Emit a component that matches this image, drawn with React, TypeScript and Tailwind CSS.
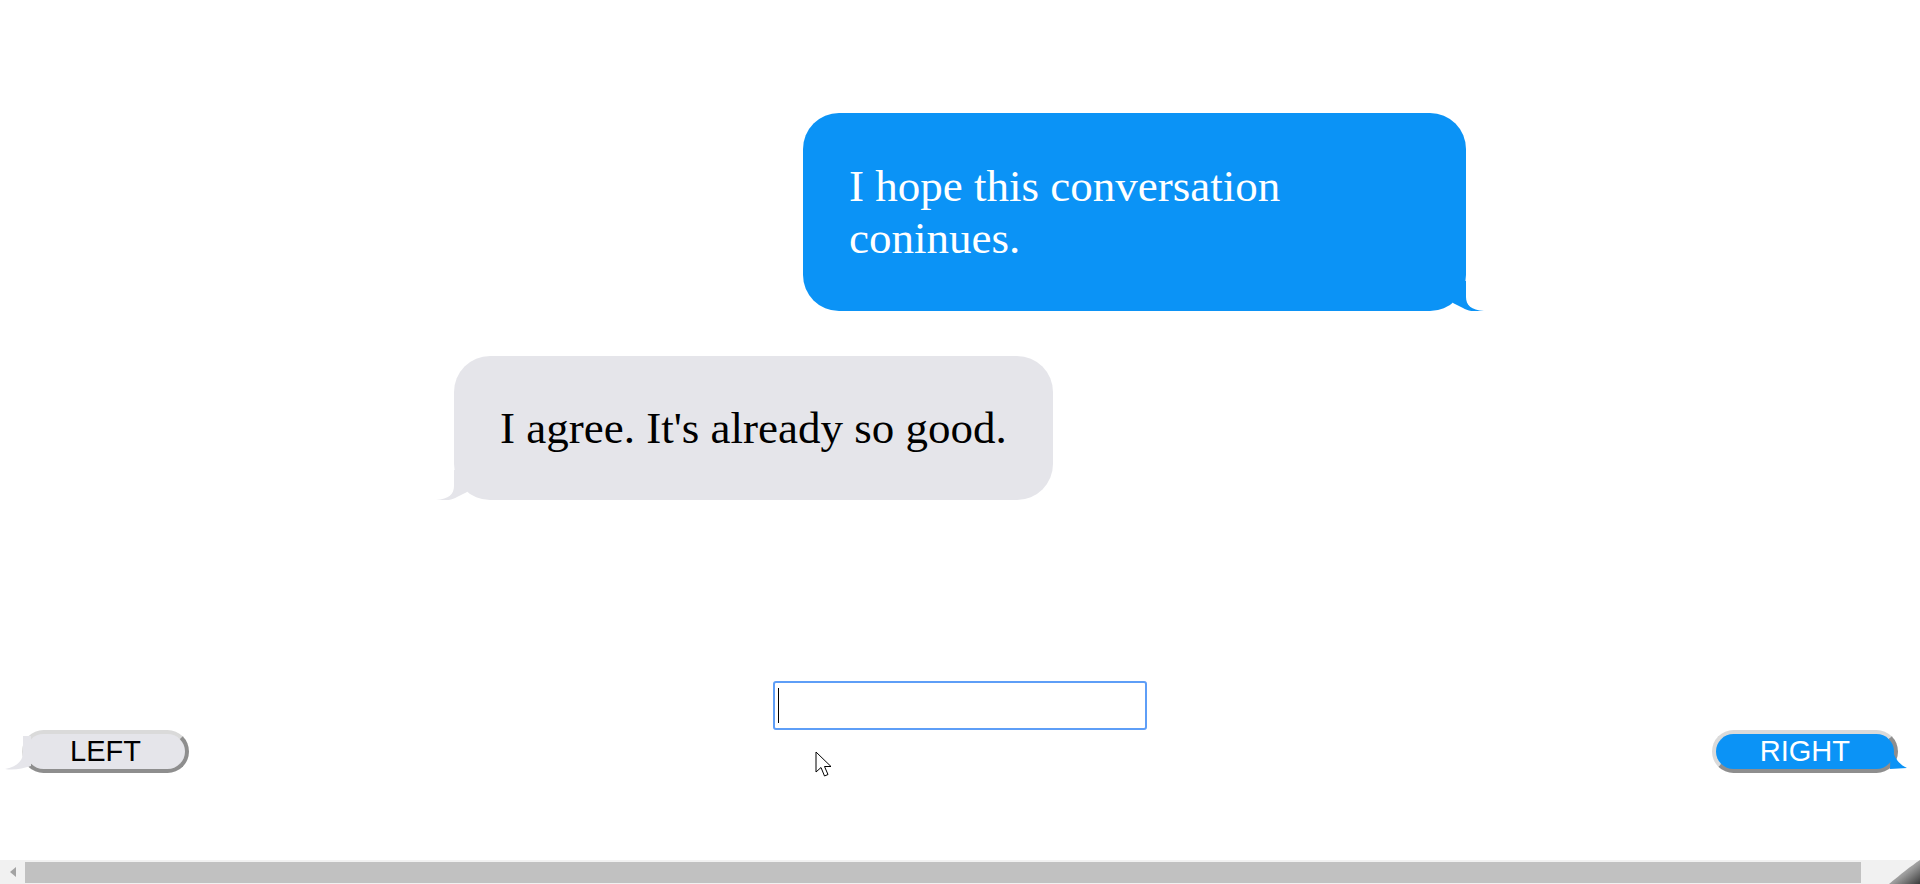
const serif = { fontFamily: '"Liberation Serif", "Times New Roman", serif' }

function Tail({ side, color }: { side: 'left' | 'right'; color: string }) {
  // bubble tail in the bottom corner, mirrored for the left side
  const d = 'M13,0 L13,16 C13,24 18,29 31,30 C23,31.5 15,30 10,27 L0,22 L0,0 Z'
  return (
    <svg
      className={
        side === 'right'
          ? 'absolute bottom-0 right-[-18px] h-[30px] w-[31px]'
          : 'absolute bottom-0 left-[-18px] h-[30px] w-[31px] -scale-x-100'
      }
      viewBox="0 0 31 30"
    >
      <path d={d} fill={color} />
    </svg>
  )
}

function Bubble({ from, children }: { from: 'me' | 'them'; children: React.ReactNode }) {
  const me = from === 'me'
  return (
    <div
      className={
        me
          ? 'relative max-w-[663px] self-end rounded-[36px] bg-[#0b93f6] px-[46px] py-[47px] text-[45px] leading-[52px] text-white'
          : 'relative self-start rounded-[36px] bg-[#e5e5ea] px-[46px] py-[46px] text-[45px] leading-[52px] text-black'
      }
      style={serif}
    >
      {children}
      <Tail side={me ? 'right' : 'left'} color={me ? '#0b93f6' : '#e5e5ea'} />
    </div>
  )
}

function SideButton({ side }: { side: 'left' | 'right' }) {
  const left = side === 'left'
  return (
    <button
      className={
        left
          ? 'relative flex h-[43px] items-center rounded-full border-4 border-t-[#dadada] border-l-[#dadada] border-b-[#8e8e8e] border-r-[#8e8e8e] bg-[#e5e5ea] px-[44px] text-[29px] leading-none text-black'
          : 'relative flex h-[43px] items-center rounded-full border-4 border-t-[#dadada] border-l-[#dadada] border-b-[#8e8e8e] border-r-[#8e8e8e] bg-[#0b93f6] px-[44px] text-[29px] leading-none text-white'
      }
      style={{ fontFamily: '"Liberation Sans", Arial, sans-serif' }}
    >
      {left ? 'LEFT' : 'RIGHT'}
      {left ? (
        <svg className="absolute left-[-22px] top-[-2px] h-[40px] w-[27px]" viewBox="0 0 27 40">
          <path d="M19,4 L19,21 C19,30 11,35 1,37 C10,38.5 19,36.5 27,34 L27,4 Z" fill="#e5e5ea" />
        </svg>
      ) : (
        <svg className="absolute right-[-20px] top-[-2px] h-[40px] w-[27px]" viewBox="0 0 27 40">
          <path d="M4,11 C6,24 11,32 20,36 L3,37 Z" fill="#0b93f6" />
        </svg>
      )}
    </button>
  )
}

export default function App() {
  return (
    <div className="relative flex h-[884px] w-full flex-col overflow-hidden bg-white">
      <div className="mx-auto flex w-[1012px] flex-col gap-[45px] pt-[113px]">
        <Bubble from="me">I hope this conversation coninues.</Bubble>
        <Bubble from="them">I agree. It's already so good.</Bubble>
      </div>

      <div className="mt-[181px] flex justify-center">
        <div className="relative">
          <input
            className="block h-[49px] w-[374px] rounded-[3px] border-2 border-[#5e9ef7] bg-white outline-none caret-transparent"
            type="text"
          />
          <span className="absolute left-[5px] top-[7px] h-[35px] w-px bg-black" />
        </div>
      </div>

      <div className="flex justify-between px-[22px]">
        <SideButton side="left" />
        <SideButton side="right" />
      </div>

      {/* mouse pointer */}
      <svg className="absolute left-[815px] top-[751px] h-[27px] w-[19px]" viewBox="0 0 19 27">
        <path
          d="M1,1 L1,21 L6,16.5 L9.5,25 L13,23.5 L9.5,15.5 L16,15.5 Z"
          fill="white"
          stroke="black"
          strokeWidth="1"
          strokeLinejoin="round"
        />
      </svg>

      {/* horizontal scrollbar */}
      <div className="mt-auto flex h-[24px] items-center bg-[#f1f1f1]">
        <div className="flex w-[25px] justify-center">
          <svg className="h-[10px] w-[6px]" viewBox="0 0 6 10">
            <path d="M6,0 L0,5 L6,10 Z" fill="#a3a3a3" />
          </svg>
        </div>
        <div className="h-[21px] flex-1 bg-[#c1c1c1]" />
        <div className="relative h-full w-[59px]">
          <svg className="absolute inset-0 h-full w-full" viewBox="0 0 59 24" preserveAspectRatio="none">
            <defs>
              <linearGradient id="corner" x1="0" y1="0" x2="1" y2="1">
                <stop offset="0" stopColor="#e4e4e4" />
                <stop offset="0.55" stopColor="#9a9a9a" />
                <stop offset="1" stopColor="#3a3a3a" />
              </linearGradient>
            </defs>
            <path d="M28,24 C40,14 50,6 59,0 L59,24 Z" fill="url(#corner)" />
          </svg>
        </div>
      </div>
    </div>
  )
}
